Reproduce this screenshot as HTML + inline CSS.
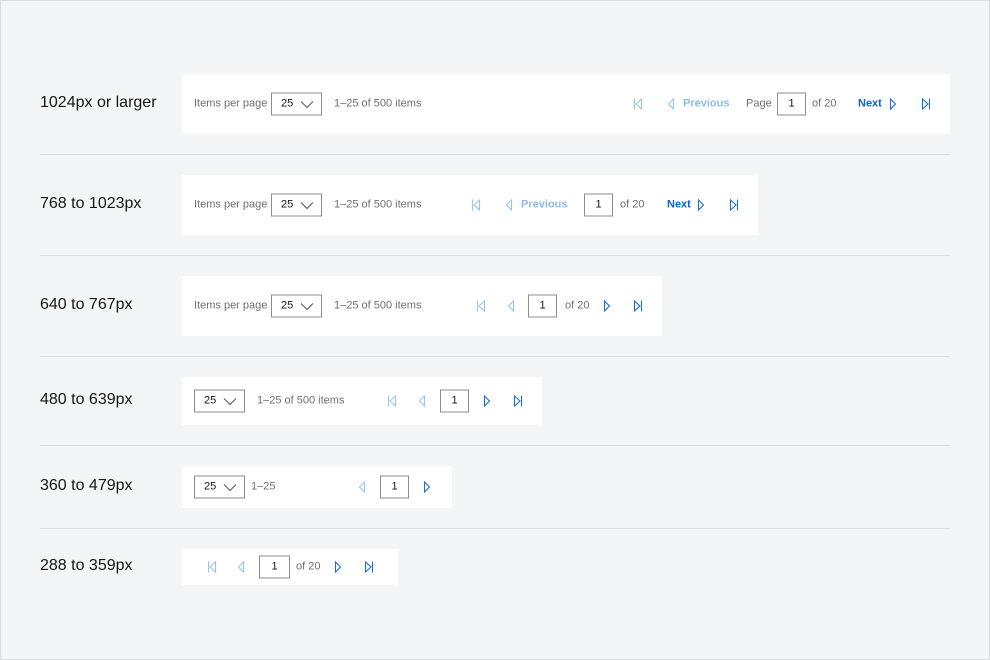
<!DOCTYPE html>
<html><head><meta charset="utf-8"><style>
*{margin:0;padding:0;box-sizing:border-box}
body{width:990px;height:660px;background:#f4f5f7;font-family:"Liberation Sans",Arial,sans-serif;position:relative;overflow:hidden}
.frame{position:absolute;left:0;top:0;width:990px;height:660px;border:1px solid #dcdde0}
.lbl{position:absolute;left:40px;font-size:16px;color:#161616;transform:translateY(-50%)}
.hr{position:absolute;left:40px;width:910px;height:1px;background:#dcdcdc}
.card{position:absolute;left:182px;background:#fff}
.a{position:absolute;transform:translateY(-50%);font-size:11px;color:#6f6f6f;white-space:nowrap;line-height:1}
.sel{position:absolute;transform:translateY(-50%);width:51px;height:23px;border:1px solid #8d8d8d;font-size:11px;color:#161616;padding-left:9px;line-height:21px}
.sel svg{position:absolute;right:7px;top:7px}
.inp{position:absolute;transform:translateY(-50%);width:29px;height:23px;border:1px solid #8d8d8d;font-size:11px;color:#161616;text-align:center;line-height:21px}
.dis{color:#8dbce9;font-weight:bold}
.nx{color:#0f62c8;font-weight:bold}
svg.i{position:absolute;transform:translateY(-50%);fill:none;stroke-width:1.1}
.d{stroke:#9cc4ea}.e{stroke:#1f6fd0}
</style></head><body>
<div class="frame"></div>

<!-- row1 -->
<div class="lbl" style="top:103px">1024px or larger</div>
<div class="card" style="top:74px;width:768px;height:60px"></div>
<div class="a" style="left:194px;top:104px">Items per page</div>
<div class="sel" style="left:271px;top:104px">25<svg width="14" height="8"><path d="M1 1l6 6 6-6" stroke="#555" fill="none"/></svg></div>
<div class="a" style="left:334px;top:104px">1–25 of 500 items</div>
<svg class="i d" style="left:633px;top:104px" width="10" height="13"><path d="M1.5 1v11M8.5 1.5L3 6.5 8.5 11.5Z"/></svg>
<svg class="i d" style="left:667px;top:104px" width="8" height="13"><path d="M6.5 1.5L1.5 6.5 6.5 11.5Z"/></svg>
<div class="a dis" style="left:683px;top:104px">Previous</div>
<div class="a" style="left:746px;top:104px">Page</div>
<div class="inp" style="left:777px;top:104px">1</div>
<div class="a" style="left:812px;top:104px">of 20</div>
<div class="a nx" style="left:858px;top:104px">Next</div>
<svg class="i e" style="left:889px;top:104px" width="8" height="13"><path d="M1.5 1.5L6.5 6.5 1.5 11.5Z"/></svg>
<svg class="i e" style="left:921px;top:104px" width="10" height="13"><path d="M1.5 1.5L7 6.5 1.5 11.5ZM8.5 1v11"/></svg>
<div class="hr" style="top:154px"></div>

<!-- row2 -->
<div class="lbl" style="top:204px">768 to 1023px</div>
<div class="card" style="top:175px;width:576px;height:60px"></div>
<div class="a" style="left:194px;top:205px">Items per page</div>
<div class="sel" style="left:271px;top:205px">25<svg width="14" height="8"><path d="M1 1l6 6 6-6" stroke="#555" fill="none"/></svg></div>
<div class="a" style="left:334px;top:205px">1–25 of 500 items</div>
<svg class="i d" style="left:471px;top:205px" width="10" height="13"><path d="M1.5 1v11M8.5 1.5L3 6.5 8.5 11.5Z"/></svg>
<svg class="i d" style="left:505px;top:205px" width="8" height="13"><path d="M6.5 1.5L1.5 6.5 6.5 11.5Z"/></svg>
<div class="a dis" style="left:521px;top:205px">Previous</div>
<div class="inp" style="left:584px;top:205px">1</div>
<div class="a" style="left:620px;top:205px">of 20</div>
<div class="a nx" style="left:667px;top:205px">Next</div>
<svg class="i e" style="left:697px;top:205px" width="8" height="13"><path d="M1.5 1.5L6.5 6.5 1.5 11.5Z"/></svg>
<svg class="i e" style="left:729px;top:205px" width="10" height="13"><path d="M1.5 1.5L7 6.5 1.5 11.5ZM8.5 1v11"/></svg>
<div class="hr" style="top:255px"></div>

<!-- row3 -->
<div class="lbl" style="top:305px">640 to 767px</div>
<div class="card" style="top:276px;width:480px;height:60px"></div>
<div class="a" style="left:194px;top:306px">Items per page</div>
<div class="sel" style="left:271px;top:306px">25<svg width="14" height="8"><path d="M1 1l6 6 6-6" stroke="#555" fill="none"/></svg></div>
<div class="a" style="left:334px;top:306px">1–25 of 500 items</div>
<svg class="i d" style="left:476px;top:306px" width="10" height="13"><path d="M1.5 1v11M8.5 1.5L3 6.5 8.5 11.5Z"/></svg>
<svg class="i d" style="left:507px;top:306px" width="8" height="13"><path d="M6.5 1.5L1.5 6.5 6.5 11.5Z"/></svg>
<div class="inp" style="left:528px;top:306px">1</div>
<div class="a" style="left:565px;top:306px">of 20</div>
<svg class="i e" style="left:603px;top:306px" width="8" height="13"><path d="M1.5 1.5L6.5 6.5 1.5 11.5Z"/></svg>
<svg class="i e" style="left:633px;top:306px" width="10" height="13"><path d="M1.5 1.5L7 6.5 1.5 11.5ZM8.5 1v11"/></svg>
<div class="hr" style="top:356px"></div>

<!-- row4 -->
<div class="lbl" style="top:400px">480 to 639px</div>
<div class="card" style="top:377px;width:360px;height:48px"></div>
<div class="sel" style="left:194px;top:401px">25<svg width="14" height="8"><path d="M1 1l6 6 6-6" stroke="#555" fill="none"/></svg></div>
<div class="a" style="left:257px;top:401px">1–25 of 500 items</div>
<svg class="i d" style="left:387px;top:401px" width="10" height="13"><path d="M1.5 1v11M8.5 1.5L3 6.5 8.5 11.5Z"/></svg>
<svg class="i d" style="left:418px;top:401px" width="8" height="13"><path d="M6.5 1.5L1.5 6.5 6.5 11.5Z"/></svg>
<div class="inp" style="left:440px;top:401px">1</div>
<svg class="i e" style="left:483px;top:401px" width="8" height="13"><path d="M1.5 1.5L6.5 6.5 1.5 11.5Z"/></svg>
<svg class="i e" style="left:513px;top:401px" width="10" height="13"><path d="M1.5 1.5L7 6.5 1.5 11.5ZM8.5 1v11"/></svg>
<div class="hr" style="top:445px"></div>

<!-- row5 -->
<div class="lbl" style="top:486px">360 to 479px</div>
<div class="card" style="top:466px;width:270px;height:42px"></div>
<div class="sel" style="left:194px;top:487px">25<svg width="14" height="8"><path d="M1 1l6 6 6-6" stroke="#555" fill="none"/></svg></div>
<div class="a" style="left:251px;top:487px">1–25</div>
<svg class="i d" style="left:358px;top:487px" width="8" height="13"><path d="M6.5 1.5L1.5 6.5 6.5 11.5Z"/></svg>
<div class="inp" style="left:380px;top:487px">1</div>
<svg class="i e" style="left:423px;top:487px" width="8" height="13"><path d="M1.5 1.5L6.5 6.5 1.5 11.5Z"/></svg>
<div class="hr" style="top:528px"></div>

<!-- row6 -->
<div class="lbl" style="top:566px">288 to 359px</div>
<div class="card" style="top:549px;width:216px;height:36px"></div>
<svg class="i d" style="left:207px;top:567px" width="10" height="13"><path d="M1.5 1v11M8.5 1.5L3 6.5 8.5 11.5Z"/></svg>
<svg class="i d" style="left:237px;top:567px" width="8" height="13"><path d="M6.5 1.5L1.5 6.5 6.5 11.5Z"/></svg>
<div class="inp" style="left:259px;top:567px;width:31px">1</div>
<div class="a" style="left:296px;top:567px">of 20</div>
<svg class="i e" style="left:334px;top:567px" width="8" height="13"><path d="M1.5 1.5L6.5 6.5 1.5 11.5Z"/></svg>
<svg class="i e" style="left:364px;top:567px" width="10" height="13"><path d="M1.5 1.5L7 6.5 1.5 11.5ZM8.5 1v11"/></svg>
</body></html>
